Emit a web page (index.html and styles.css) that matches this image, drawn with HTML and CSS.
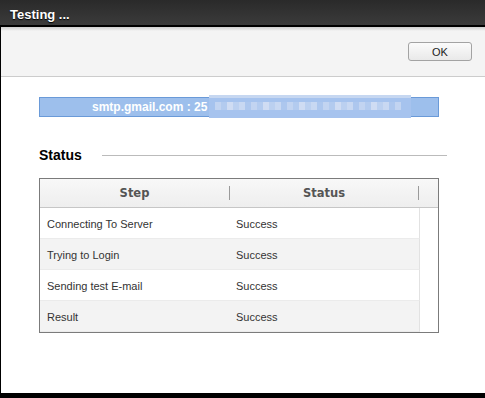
FILE: index.html
```html
<!DOCTYPE html>
<html>
    <head>
        <meta charset="utf-8">
        <link rel="stylesheet" href="styles.css">
        <title>Testing ...</title>
    </head>
    <body>
        <div class="dialog">

            <div class="dialog-title">Testing ...</div>

            <div class="dialog-body">
                <div class="toolbar">
                    <button class="btn">OK</button>
                </div>

                <div class="content">
                    <div class="host-bar">
                        <span>smtp.gmail.com : 25</span>
                        <span class="host-mask"></span>
                    </div>

                    <div class="section-head">
                        <h2>Status</h2>
                        <span class="section-rule"></span>
                    </div>

                    <div class="grid">
                        <div class="grid-head">
                            <div class="head-cell step">Step</div>
                            <span class="col-sep"></span>
                            <div class="head-cell status">Status</div>
                            <span class="col-sep"></span>
                        </div>
                        <div class="grid-body">
                            <div class="row">
                                <div class="cell">Connecting To Server</div>
                                <div class="cell">Success</div>
                            </div>
                            <div class="row alt">
                                <div class="cell">Trying to Login</div>
                                <div class="cell">Success</div>
                            </div>
                            <div class="row">
                                <div class="cell">Sending test E-mail</div>
                                <div class="cell">Success</div>
                            </div>
                            <div class="row alt">
                                <div class="cell">Result</div>
                                <div class="cell">Success</div>
                            </div>
                        </div>
                    </div>
                </div>
            </div>

            <div class="dialog-foot"></div>
        </div>
    </body>
</html>
```

FILE: styles.css
```css
body {
    margin: 0;
    font-family: "Liberation Sans", Arial, sans-serif;
    font-size: 11px;
    background: #ffffff;
    overflow: hidden;
}

.dialog {
    display: flex;
    flex-direction: column;
    height: 100vh;
}

.dialog-title {
    height: 20px;
    padding: 5px 0 0 10px;
    line-height: 20px;
    font-size: 13px;
    font-weight: bold;
    color: #ffffff;
    text-shadow: 0 1px 1px #000000;
    background: linear-gradient(#2a2a2a, #3b3b3b);
    border-bottom: 2px solid #000000;
}

.dialog-body {
    flex: 1;
    border-left: 1px solid #000000;
}

.dialog-foot {
    height: 5px;
    background: #000000;
}

.toolbar {
    height: 49px;
    display: flex;
    justify-content: flex-end;
    align-items: center;
    padding-right: 13px;
    background: linear-gradient(#cfcfcf 0px, #f4f4f4 4px, #f4f4f4 100%);
    border-bottom: 1px solid #cccccc;
}

.btn {
    width: 64px;
    height: 19px;
    padding: 0;
    border: 1px solid #a3a3a3;
    border-radius: 3px;
    background: linear-gradient(#fbfbfb, #e9e9e9);
    font-family: "Liberation Sans", Arial, sans-serif;
    font-size: 11px;
    color: #222222;
}

.content {
    padding: 20px 0 0 38px;
}

.host-bar {
    width: 400px;
    height: 20px;
    box-sizing: border-box;
    display: flex;
    align-items: center;
    padding-left: 52px;
    background: #9dbfec;
    border: 1px solid #6a9ad8;
    color: #ffffff;
    font-size: 12px;
    font-weight: bold;
}

.host-mask {
    align-self: stretch;
    width: 202px;
    margin: -3px 0 -2px 2px;
    background:
        linear-gradient(#c6d7f1, #c6d7f1) 0 0 / 100% 3px no-repeat,
        repeating-linear-gradient(90deg, #c2d4f1 0 6px, #b3cbef 6px 12px, #cfdcf3 12px 18px, #bbd0f0 18px 24px, #c8d8f2 24px 30px, #adc7ee 30px 36px) 6px 7px / 186px 8px no-repeat,
        #a6c3ee;
}

.section-head {
    width: 408px;
    margin-top: 30px;
    display: flex;
    align-items: center;
}

.section-head h2 {
    margin: 0;
    font-size: 14px;
    line-height: 16px;
    color: #000000;
}

.section-rule {
    flex: 1;
    height: 1px;
    margin-left: 20px;
    background: #bbbbbb;
}

.grid {
    width: 400px;
    box-sizing: border-box;
    margin-top: 15px;
    border: 1px solid #7b7b7b;
}

.grid-head {
    height: 28px;
    display: flex;
    align-items: center;
    background: linear-gradient(#f8f8f8, #eeeeee);
    border-bottom: 1px solid #c6c6c6;
}

.head-cell {
    text-align: center;
    line-height: 28px;
    font-family: "DejaVu Sans", sans-serif;
    font-size: 11.5px;
    font-weight: bold;
    color: #555555;
}

.head-cell.step {
    width: 189px;
}

.head-cell.status {
    width: 188px;
}

.col-sep {
    width: 1px;
    height: 14px;
    background: #9a9a9a;
}

.grid-body {
    background: #ffffff;
}

.row {
    width: 380px;
    box-sizing: border-box;
    display: grid;
    grid-template-columns: 190px 1fr;
    border-right: 1px solid #e2e2e2;
    border-bottom: 1px solid #ebebeb;
    background: #ffffff;
}

.row.alt {
    background: #f3f3f3;
}

.cell {
    height: 28px;
    padding-top: 2px;
    line-height: 28px;
    color: #333333;
}

.cell:first-child {
    padding-left: 7px;
}

.cell:last-child {
    padding-left: 6px;
}
```
